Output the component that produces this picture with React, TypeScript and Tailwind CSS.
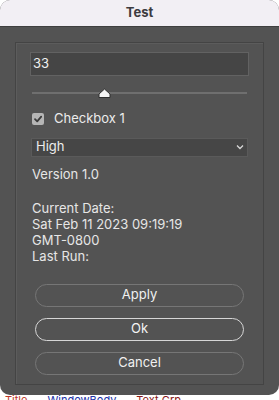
import React from 'react';

function SliderThumb() {
  return (
    <svg width="13" height="10" viewBox="0 0 13 10" className="absolute top-[-4px] left-[66px]">
      <path d="M1 9.5 L1 6 L6.5 1 L12 6 L12 9.5 Z" fill="#f4f4f4" stroke="#2e2e2e" strokeWidth="1" />
    </svg>
  );
}

export default function App() {
  return (
    <div className="w-[279px] h-[400px] bg-white overflow-hidden" style={{ fontFamily: 'Inter, "Liberation Sans", sans-serif' }}>
      <div className="h-[395px] flex flex-col rounded-[10px] overflow-hidden bg-[#535353]">
        <div className="h-[27px] shrink-0 bg-[#f2eff4] border-b border-[#3f3f3f] flex items-center justify-center">
          <span className="text-[13px] font-bold text-[#3d3b40]">Test</span>
        </div>
        <div className="flex-1 flex flex-col pt-[15px] pb-[10px] px-[15px]">
          <div className="flex-1 flex flex-col border border-[#444444] shadow-[inset_1px_1px_0_#5c5c5c] px-[14px] pt-[9px]">
            <div className="h-[24px] bg-[#454545] border border-[#626262] flex items-center px-[2px]">
              <span className="text-[13px] text-[#f0f0f0]">33</span>
            </div>
            <div className="relative mt-[16px] mx-[2px] h-[2px] bg-[#6f6f6f]">
              <SliderThumb />
            </div>
            <div className="mt-[15px] flex items-center gap-[10px] ml-[2px]">
              <div className="w-[12px] h-[12px] rounded-[2px] bg-[#b5b5b5] flex items-center justify-center">
                <svg width="10" height="10" viewBox="0 0 10 10">
                  <path d="M2 5.2 L4.2 7.4 L8.2 2.6" fill="none" stroke="#3b3b3b" strokeWidth="1.8" strokeLinecap="round" strokeLinejoin="round" />
                </svg>
              </div>
              <span className="text-[13px] text-[#ececec]">Checkbox 1</span>
            </div>
            <div className="mt-[9px] h-[19px] mx-[1px] bg-[#464646] border border-[#5a5a5a] flex items-center justify-between pl-[4px] pr-[3px]">
              <span className="text-[13px] text-[#ececec]">High</span>
              <svg width="8" height="6" viewBox="0 0 8 6">
                <path d="M1 1.5 L4 4.5 L7 1.5" fill="none" stroke="#d8d8d8" strokeWidth="1.3" />
              </svg>
            </div>
            <div className="mt-[9px] ml-[2px] text-[13px] leading-[16px] text-[#e6e6e6]">
              <div>Version 1.0</div>
              <div className="h-[18px]" />
              <div>Current Date:</div>
              <div>Sat Feb 11 2023 09:19:19</div>
              <div>GMT-0800</div>
              <div>Last Run:</div>
            </div>
            <div className="mt-[20px] mx-[5px] flex flex-col gap-[11px]">
              <button className="h-[23px] rounded-full border border-[#767676] text-[13px] text-[#f0f0f0]">Apply</button>
              <button className="h-[23px] rounded-full border border-[#d6d6d6] text-[13px] text-[#f4f4f4]">Ok</button>
              <button className="h-[23px] rounded-full border border-[#767676] text-[13px] text-[#f0f0f0]">Cancel</button>
            </div>
          </div>
        </div>
      </div>
      <div className="h-[5px] overflow-hidden flex gap-[20px] pl-[5px] text-[11px] leading-[11px]">
        <span className="text-[#c0392b]">Title</span>
        <span className="text-[#2233aa]">WindowBody</span>
        <span className="text-[#8b1a1a]">Text Grp</span>
      </div>
    </div>
  );
}
